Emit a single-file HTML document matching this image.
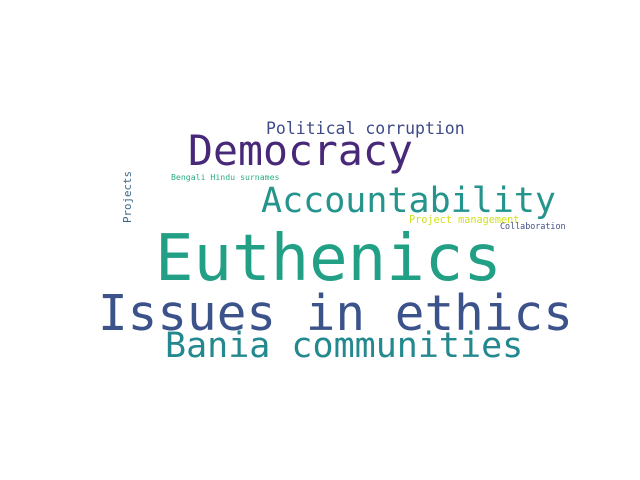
<!DOCTYPE html>
<html><head><style>
html,body{margin:0;padding:0;background:#fff;width:640px;height:480px;overflow:hidden}
svg text{font-family:"DejaVu Sans Mono","Liberation Mono",monospace}
</style></head><body>
<svg width="640" height="480" xmlns="http://www.w3.org/2000/svg">
<text x="266" y="134" font-size="16.5" fill="#3e4a89">Political corruption</text>
<text x="188" y="165" font-size="41.5" fill="#482878">Democracy</text>
<text x="171" y="180" font-size="8.2" fill="#2ab07f">Bengali Hindu surnames</text>
<text x="261" y="212" font-size="35" fill="#25948d">Accountability</text>
<text x="409" y="223" font-size="10.2" fill="#d0e11c">Project management</text>
<text x="500" y="229" font-size="8.4" fill="#46508a">Collaboration</text>
<text transform="translate(131,223) rotate(-90)" font-size="10.8" fill="#3b6a8b">Projects</text>
<text x="155" y="280" font-size="64" fill="#21a085">Euthenics</text>
<text x="98" y="330" font-size="49.3" fill="#3b528b">Issues in ethics</text>
<text x="165" y="357" font-size="35" fill="#23898e">Bania communities</text>
</svg>
</body></html>
